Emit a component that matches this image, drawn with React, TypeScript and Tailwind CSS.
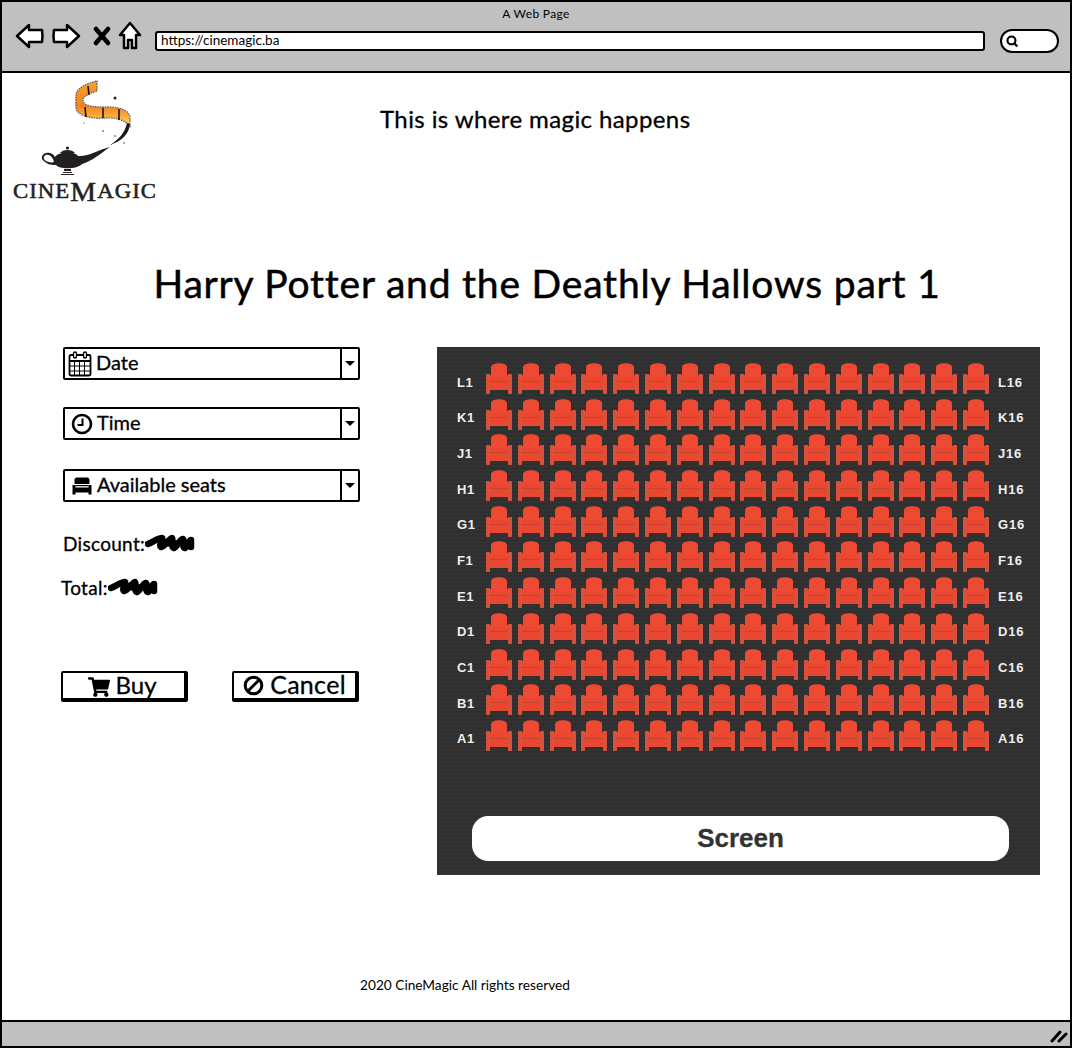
import { FaShoppingCart } from "react-icons/fa";

const rows = ["L", "K", "J", "H", "G", "F", "E", "D", "C", "B", "A"];
const seats = Array.from({ length: 16 }, (_, i) => i);

function Seat() {
  return (
    <svg width="26" height="31" viewBox="0 0 26 31" className="block shrink-0">
      <rect x="0" y="11" width="4" height="20" rx="0.8" fill="#d9513d" />
      <rect x="22" y="11" width="4" height="20" rx="0.8" fill="#d9513d" />
      <path d="M5 4.5C5 1.5 9 0.3 13 0.3S21 1.5 21 4.5V16H5Z" fill="#ee4a33" />
      <rect x="4" y="12" width="18" height="15" fill="#ea4730" />
      <rect x="5" y="4" width="16" height="10" fill="#ee4a33" />
      <rect x="4" y="18" width="18" height="1" fill="#c9412c" />
    </svg>
  );
}

function Scribble() {
  return (
    <svg width="50" height="18" viewBox="0 0 50 18" className="block shrink-0">
      <path
        d="M3 10C8 8 13 4 17 4C19 5 13 11 16 13C20 12 24 5 27 4C29 6 25 13 29 14C33 12 35 5 38 5C40 7 36 13 40 14C43 12 44 6 46 6L46 13M33 9L44 9M21 9L30 10"
        fill="none"
        stroke="#000"
        strokeWidth="6.5"
        strokeLinecap="round"
        strokeLinejoin="round"
      />
    </svg>
  );
}

function Logo() {
  return (
    <svg width="156" height="132" viewBox="10 80 156 132" className="block">
      <defs>
        <linearGradient id="film" gradientUnits="userSpaceOnUse" x1="0" y1="82" x2="0" y2="127">
          <stop offset="0" stopColor="#f9a02a" />
          <stop offset="0.55" stopColor="#f5821f" />
          <stop offset="0.8" stopColor="#fbb03b" />
          <stop offset="1" stopColor="#ffdc72" />
        </linearGradient>
      </defs>
      <path
        d="M97 82L97 92C90 94 84 97 83 100C82 103 85 106 90 107C100 109 110 107 118 109C124 110 129 113 130 118L130 127C126 122 116 118 106 119C95 120 82 118 77 112C75 108 76 100 76 95C78 88 88 84 97 82Z"
        fill="url(#film)"
        stroke="#666"
        strokeWidth="1.4"
        strokeDasharray="1.5 1"
      />
      <path d="M88 87L89 96M85 108L86 118M103 109L103 119M119 110L119 121" stroke="#111" strokeWidth="1.6" fill="none" />
      <path d="M130 125C129 135 122 142 110 146C118 141 125 134 127 124Z" fill="#1d1a1a" />
      <circle cx="115" cy="99" r="1.5" fill="#222" />
      <circle cx="103" cy="132" r="0.8" fill="#222" />
      <circle cx="115" cy="137" r="0.8" fill="#222" />
      <circle cx="124" cy="144" r="0.7" fill="#222" />
      <circle cx="84" cy="124" r="0.6" fill="#222" />
      <path
        d="M55 158C60 152 74 152 78 157C88 158 98 151 110 148C100 155 92 162 82 165C78 170 60 171 56 166C50 166 46 165 42 160C41 155 46 153 50 154C53 155 54 156 55 158ZM46 156C43 157 43 160 46 162C48 163 52 164 54 163C53 159 50 155 46 156Z"
        fill="#231f20"
        fillRule="evenodd"
      />
      <circle cx="67.5" cy="149" r="1.6" fill="#231f20" />
      <path d="M60 154C63 150 72 150 75 154Z" fill="#231f20" />
      <path d="M64 170H71V172H64ZM63 173H72V174H63ZM61 175H74V176H61Z" fill="#231f20" />
      <text x="13" y="199" fontFamily="Liberation Serif, serif" fontSize="22" letterSpacing="1" fill="#231f20" stroke="#231f20" strokeWidth="0.55" textLength="144" lengthAdjust="spacingAndGlyphs">
        CINE<tspan fontSize="28" dy="3">M</tspan><tspan dy="-3">AGIC</tspan>
      </text>
    </svg>
  );
}

function Select({ icon, label, mt }: { icon: React.ReactNode; label: string; mt: string }) {
  return (
    <div className={`${mt} ml-[61px] flex h-[33px] w-[297px] items-stretch rounded-[2px] border-2 border-black bg-white`}>
      <div className="flex flex-1 items-center gap-1 pb-[3px] pl-[3px] text-[20px] leading-none [-webkit-text-stroke:0.3px_black]">
        {icon}
        <span>{label}</span>
      </div>
      <div className="flex w-[18px] items-center justify-center border-l-2 border-black pr-[1px]">
        <div className="h-0 w-0 border-x-[5px] border-t-[5px] border-x-transparent border-t-black" />
      </div>
    </div>
  );
}

function CalendarIcon() {
  return (
    <svg width="24" height="26" viewBox="0 0 24 26" fill="none" stroke="#000" className="mt-[3px] block shrink-0">
      <rect x="1.5" y="4" width="21" height="20.5" rx="1.5" strokeWidth="1.8" />
      <path d="M2 10H22" strokeWidth="2" />
      <path d="M2 15H22M2 20H22M6.5 10V24M11.5 10V24M16.5 10V24" strokeWidth="1" />
      <rect x="5.5" y="1" width="3" height="6" rx="1.5" fill="#fff" strokeWidth="1.4" />
      <rect x="15.5" y="1" width="3" height="6" rx="1.5" fill="#fff" strokeWidth="1.4" />
    </svg>
  );
}

function ClockIcon() {
  return (
    <svg width="22" height="22" viewBox="0 0 22 22" fill="none" stroke="#000" className="ml-[3px] mt-[3px] block shrink-0">
      <circle cx="11" cy="11" r="9" strokeWidth="2.6" />
      <path d="M11.5 5.5V12H6.5" strokeWidth="2" />
    </svg>
  );
}

function ChairIcon() {
  return (
    <svg width="20" height="18" viewBox="0 0 20 18" fill="#000" className="ml-[4px] mr-[1px] mt-[3px] block shrink-0">
      <path d="M5 0.5H15Q17.5 0.5 17.5 3V7H2.5V3Q2.5 0.5 5 0.5Z" />
      <path d="M0.5 8H3.5V10.5H16.5V8H19.5V17.5H16.5V15.5H3.5V17.5H0.5Z" />
      <rect x="3.5" y="8" width="13" height="1.2" />
    </svg>
  );
}

function BanIcon() {
  return (
    <svg width="21" height="21" viewBox="0 0 21 21" fill="none" stroke="#000" strokeWidth="3" className="mt-[2px] block shrink-0">
      <circle cx="10.5" cy="10.5" r="8.3" />
      <path d="M5 16L16 5" />
    </svg>
  );
}

function NavIcons() {
  const p = { fill: "#fff", stroke: "#000", strokeWidth: 2.5, strokeLinejoin: "round" as const };
  return (
    <div className="flex h-[30px] items-center">
      <svg width="30" height="28" viewBox="0 0 30 28" className="block">
        <path d="M2 14L14 3V8H27Q28 14 27 20H14V25Z" {...p} />
      </svg>
      <svg width="30" height="28" viewBox="0 0 30 28" className="ml-[6px] block">
        <path d="M28 14L16 3V8H3Q2 14 3 20H16V25Z" {...p} />
      </svg>
      <svg width="18" height="20" viewBox="0 0 18 20" className="ml-[12px] block">
        <path d="M3 3L15 17M15 3L3 17" stroke="#000" strokeWidth="4.5" strokeLinecap="round" fill="none" />
      </svg>
      <svg width="24" height="30" viewBox="0 0 24 30" className="ml-[7px] block">
        <path d="M12 2L22 14H18V27H14V19H10V27H6V14H2Z" {...p} />
      </svg>
    </div>
  );
}

export default function App() {
  return (
    <div className="flex h-[1048px] w-[1072px] flex-col border-2 border-black bg-white font-['Lato',sans-serif] text-black">
      <header className="h-[71px] shrink-0 border-b-2 border-black bg-[#c0c0c0]">
        <div className="pt-[4px] text-center text-[12px] leading-[15px] tracking-[0.35px]">A Web Page</div>
        <div className="flex items-start pl-[13px]">
          <NavIcons />
          <div className="ml-[13px] mt-[10px] flex h-[20px] w-[830px] items-center rounded-[3px] border-2 border-black bg-white pl-[4px] text-[13.5px] leading-none">
            https://cinemagic.ba
          </div>
          <div className="ml-[15px] mt-[8px] flex h-[24px] w-[59px] items-center rounded-[12px] border-2 border-black bg-white pl-[3px]">
            <svg width="14" height="14" viewBox="0 0 13 13" className="block">
              <circle cx="6" cy="6" r="3.7" fill="none" stroke="#000" strokeWidth="2" />
              <path d="M8.5 8.5L11.5 11.5" stroke="#000" strokeWidth="2" />
            </svg>
          </div>
        </div>
      </header>

      <main className="flex min-h-0 flex-1 flex-col">
        <div className="flex h-[133px] shrink-0">
          <div className="ml-[8px] mt-[6px] w-[150px] shrink-0">
            <Logo />
          </div>
          <div className="ml-[220px] pt-[31px] text-[24px] leading-[30px] tracking-[0.4px] [-webkit-text-stroke:0.3px_black]">This is where magic happens</div>
        </div>

        <h1 className="mt-[54px] pl-[22px] text-center text-[39px] font-normal leading-[46px] tracking-[0.8px] [-webkit-text-stroke:0.5px_black]">
          Harry Potter and the Deathly Hallows part 1
        </h1>

        <div className="mt-[41px] flex h-[528px] shrink-0">
          <div className="w-[435px] shrink-0">
            <Select icon={<CalendarIcon />} label="Date" mt="mt-[0px]" />
            <Select icon={<ClockIcon />} label="Time" mt="mt-[27px]" />
            <Select icon={<ChairIcon />} label="Available seats" mt="mt-[29px]" />
            <div className="ml-[61px] mt-[29px] flex h-[24px] items-center text-[19px] leading-none tracking-[0.3px] [-webkit-text-stroke:0.3px_black]">
              Discount:
              <Scribble />
            </div>
            <div className="ml-[59px] mt-[20px] flex h-[24px] items-center text-[19px] leading-none tracking-[0.3px] [-webkit-text-stroke:0.3px_black]">
              Total:
              <Scribble />
            </div>
            <div className="ml-[59px] mt-[72px] flex gap-[44px]">
              <button className="flex h-[31px] w-[127px] items-center justify-center gap-[5px] rounded-[2px] border-2 border-b-[4px] border-r-[4px] border-black bg-white pb-[2px] pr-[2px] text-[24px] leading-none [-webkit-text-stroke:0.3px_black]">
                <FaShoppingCart size={22} className="mt-[4px]" />
                Buy
              </button>
              <button className="flex h-[31px] w-[127px] items-center justify-center gap-[6px] rounded-[2px] border-2 border-b-[4px] border-r-[4px] border-black bg-white pb-[2px] text-[25px] leading-none tracking-[0.3px] [-webkit-text-stroke:0.3px_black]">
                <BanIcon />
                Cancel
              </button>
            </div>
          </div>

          <section className="flex h-[528px] w-[603px] shrink-0 flex-col bg-[repeating-linear-gradient(0deg,#333333_0px,#333333_2px,#2f2f2f_2px,#2f2f2f_4px)] pt-[16px] font-['Liberation_Sans',sans-serif]">
            <div className="flex flex-col gap-[4.7px]">
              {rows.map((r) => (
                <div key={r} className="flex items-center">
                  <div className="w-[49px] pl-[20px] pt-[7px] text-[13px] font-bold leading-none tracking-[0.5px] text-[#eeeeee]">{r}1</div>
                  <div className="flex w-[503px] gap-[5.8px]">
                    {seats.map((s) => (
                      <Seat key={s} />
                    ))}
                  </div>
                  <div className="pl-[9px] pt-[7px] text-[13px] font-bold leading-none tracking-[0.8px] text-[#eeeeee]">{r}16</div>
                </div>
              ))}
            </div>
            <div className="ml-[35px] mt-[65px] flex h-[45px] w-[537px] items-center justify-center rounded-[16px] bg-white text-[26px] font-bold text-[#333333] [-webkit-text-stroke:0.3px_#333333]">
              Screen
            </div>
          </section>
        </div>

        <div className="mt-[101px] pl-[358px] text-[13.7px] leading-[18px]">2020 CineMagic All rights reserved</div>
      </main>

      <footer className="relative h-[26px] shrink-0 border-t-2 border-black bg-[#c0c0c0]">
        <svg width="18" height="14" viewBox="0 0 18 14" className="absolute bottom-[3px] right-[2px] block">
          <path d="M2 12L10 3M9 12L16 5" stroke="#000" strokeWidth="3" strokeLinecap="round" />
        </svg>
      </footer>
    </div>
  );
}
